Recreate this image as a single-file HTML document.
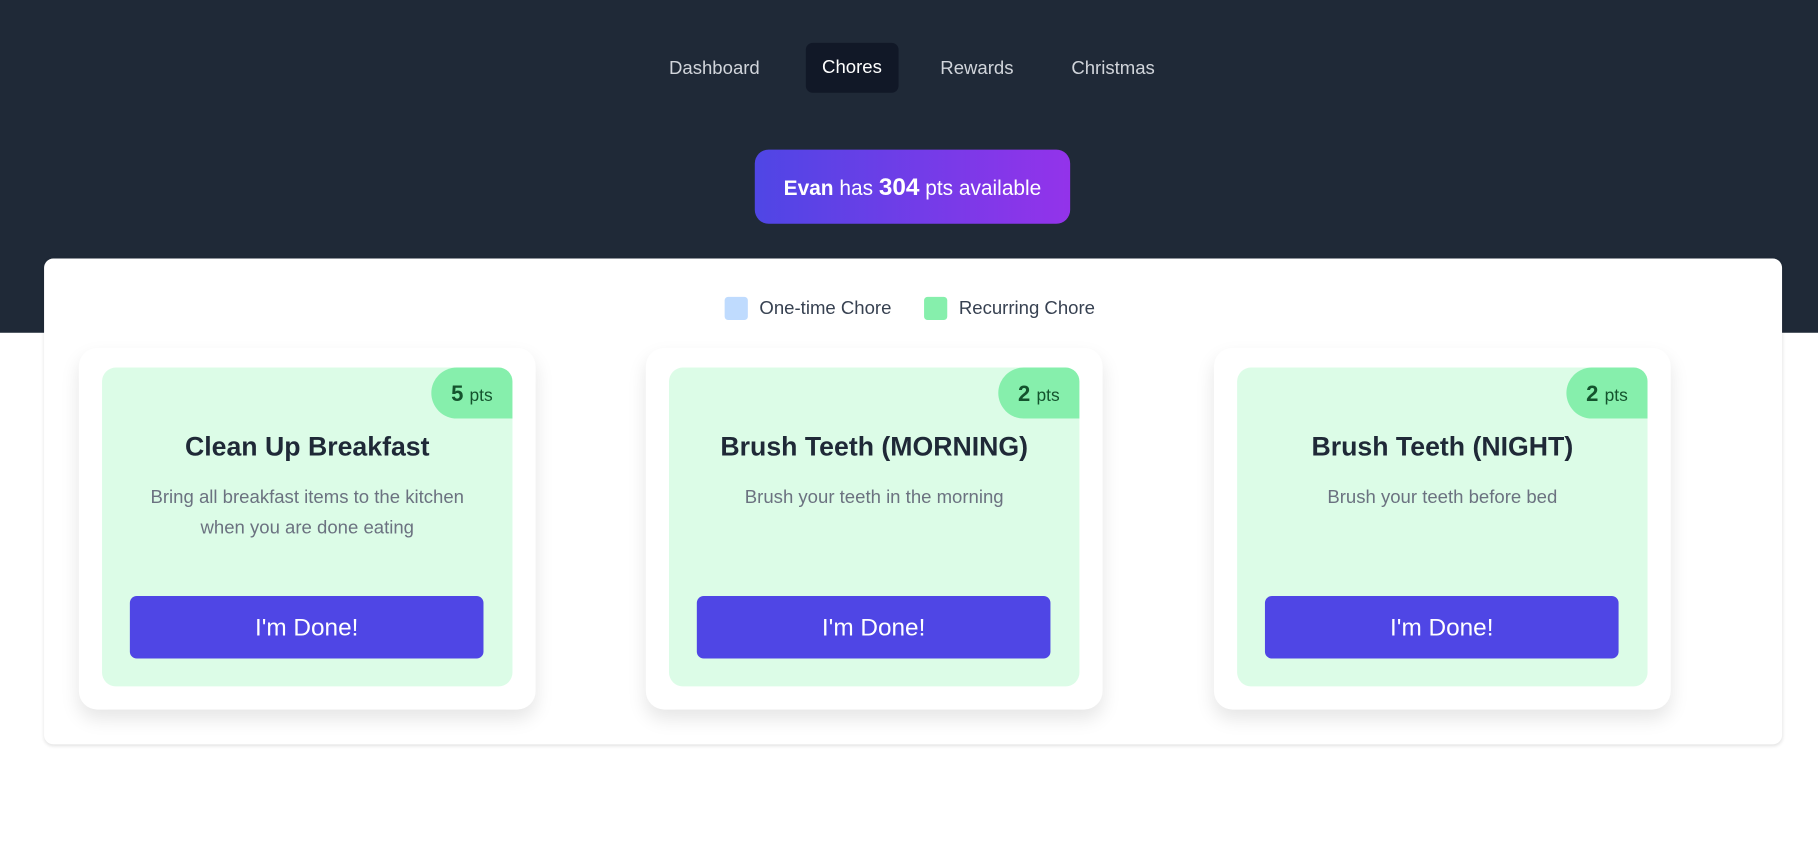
<!DOCTYPE html>
<html><head><style>
html,body{margin:0;padding:0;background:#fff;overflow:hidden}
body{width:1818px;height:851px}
#w{width:1568px;height:734px;transform:scale(1.15944);transform-origin:0 0;position:relative;font-family:"Liberation Sans",sans-serif}
.hdr{position:absolute;left:0;top:0;width:1568px;height:287px;background:#1f2937}
.nav{position:absolute;top:38px;height:43px;line-height:43px;color:#d1d5db;font-size:16px;padding:0 14px;border-radius:6px}
.nav.a{background:#111827;color:#fff;top:37px}
.badge{position:absolute;left:651px;top:129px;width:272px;height:64px;border-radius:12px;background:linear-gradient(90deg,#4f46e5,#9333ea);color:#fff;font-size:18px;line-height:66px;text-align:center}
.panel{position:absolute;left:38px;top:223px;width:1499px;height:419px;background:#fff;border-radius:8px;box-shadow:0 1px 3px rgba(0,0,0,.12)}
.leg{position:absolute;top:256px;font-size:16px;color:#374151;line-height:22px}
.sq{display:inline-block;width:20px;height:20px;border-radius:3px;vertical-align:top;margin-right:10px}
.card{position:absolute;top:300px;width:394px;height:312px;background:#fff;border-radius:16px;box-shadow:0 8px 16px rgba(0,0,0,.1)}
.in{position:absolute;left:20px;top:17px;width:354px;height:275px;background:#dcfce7;border-radius:12px;overflow:hidden;text-align:center}
.pts{position:absolute;right:0;top:0;width:70px;height:44px;background:#86efac;border-radius:22px 0 0 22px;line-height:48px;color:#14532d;font-size:19px;font-weight:bold}
.pts small{font-size:15px;font-weight:normal}
.t{position:absolute;top:55px;left:0;right:0;font-size:23px;font-weight:bold;color:#1f2937}
.d{position:absolute;top:100px;left:28px;right:28px;font-size:16px;color:#6b7280;line-height:26px}
.btn{position:absolute;left:24px;top:197px;width:305px;height:54px;background:#4f46e5;border-radius:6px;color:#fff;font-size:21px;line-height:56px}
</style></head><body><div id="w">
<div class="hdr"></div>
<div class="nav" style="left:563px">Dashboard</div>
<div class="nav a" style="left:695px">Chores</div>
<div class="nav" style="left:797px">Rewards</div>
<div class="nav" style="left:910px">Christmas</div>
<div class="badge"><b>Evan</b> has <b style="font-size:21px">304</b> pts available</div>
<div class="panel"></div>
<div class="leg" style="left:625px"><span class="sq" style="background:#bfdbfe"></span>One-time Chore</div>
<div class="leg" style="left:797px"><span class="sq" style="background:#86efac"></span>Recurring Chore</div>
<div class="card" style="left:68px"><div class="in"><div class="pts">5 <small>pts</small></div><div class="t">Clean Up Breakfast</div><div class="d">Bring all breakfast items to the kitchen when you are done eating</div><div class="btn">I'm Done!</div></div></div>
<div class="card" style="left:557px"><div class="in"><div class="pts">2 <small>pts</small></div><div class="t">Brush Teeth (MORNING)</div><div class="d">Brush your teeth in the morning</div><div class="btn">I'm Done!</div></div></div>
<div class="card" style="left:1047px"><div class="in"><div class="pts">2 <small>pts</small></div><div class="t">Brush Teeth (NIGHT)</div><div class="d">Brush your teeth before bed</div><div class="btn">I'm Done!</div></div></div>
</div></body></html>
